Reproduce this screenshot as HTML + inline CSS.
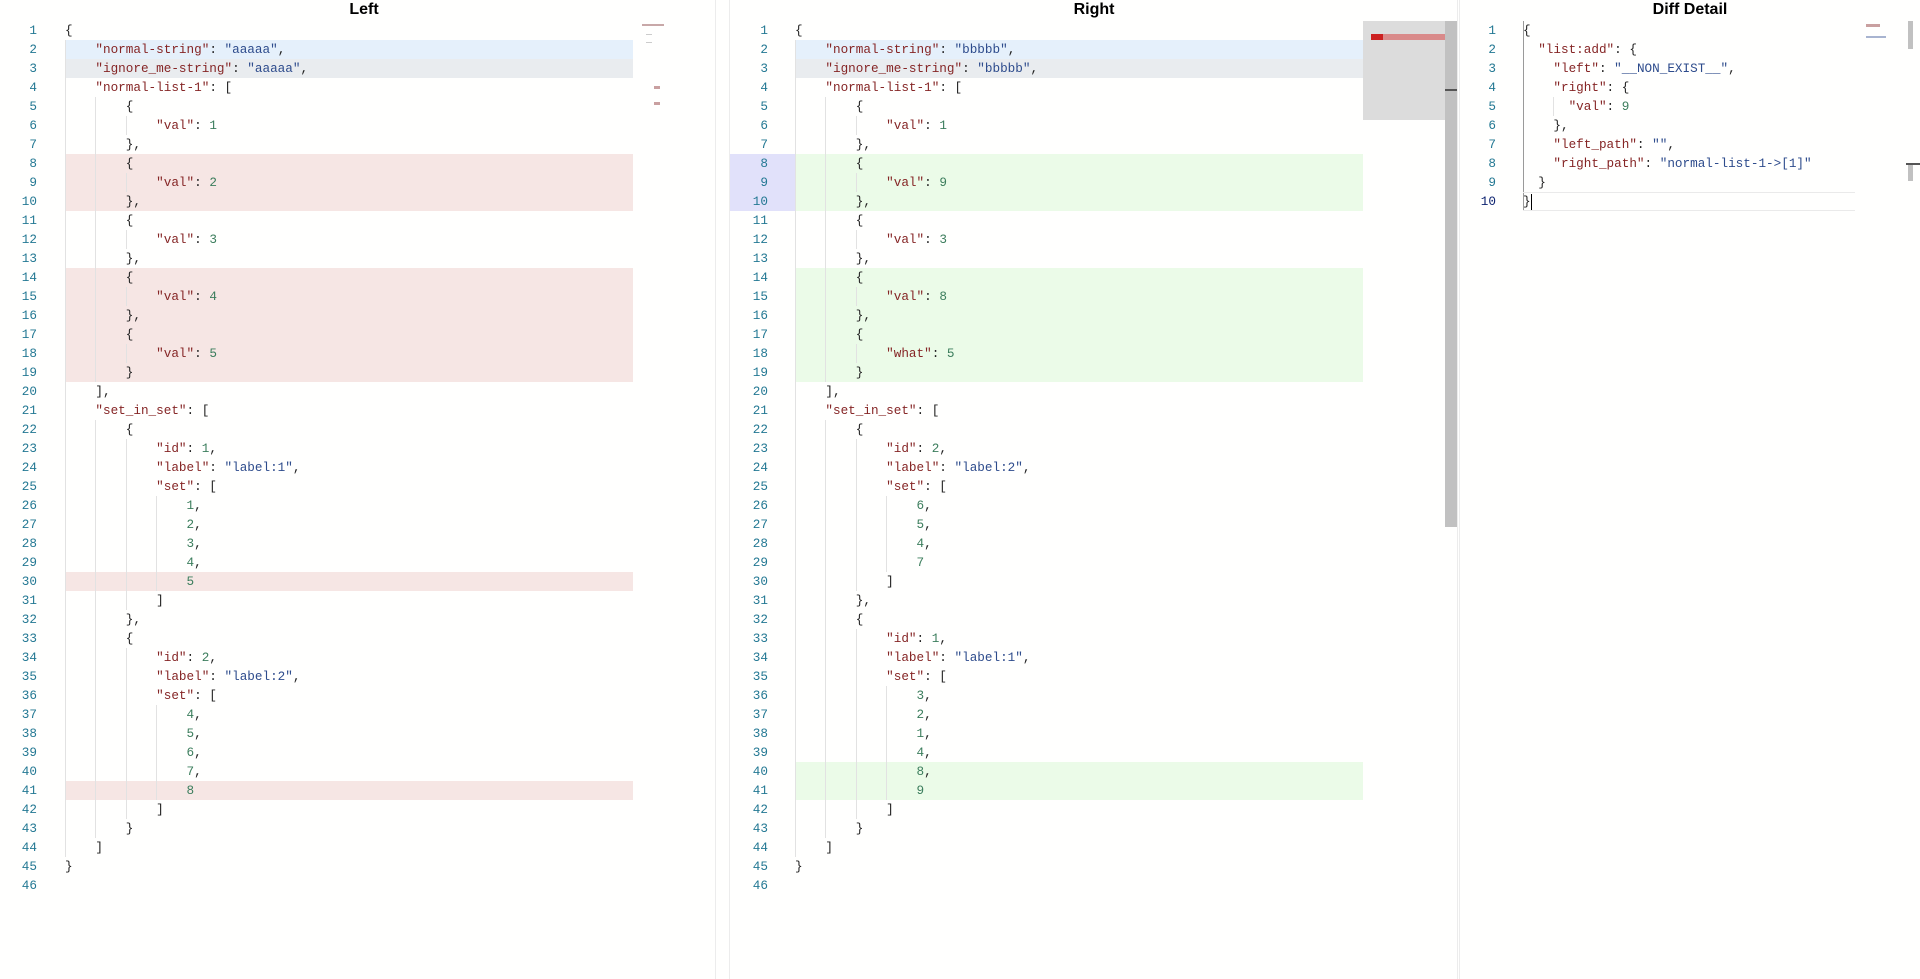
<!DOCTYPE html>
<html><head><meta charset="utf-8"><style>
*{margin:0;padding:0;box-sizing:border-box}
body{width:1920px;height:979px;background:#fffffe;position:relative;overflow:hidden;font-family:"Liberation Mono",monospace;font-size:12.67px}
.t{position:absolute;top:1px;font:bold 16px "Liberation Sans",sans-serif;color:#000;text-align:center}
.p{position:absolute;top:21px}
.r{height:19px;line-height:19px;display:flex;white-space:pre}
.r b{font-weight:normal;color:#237893;text-align:right;flex:none}
.r code{font-family:inherit;flex:none;color:#222}
.k{color:#852525}.s{color:#2d4b8c}.n{color:#3b7d5c}
i{display:inline-block;width:4ch;height:19px;vertical-align:top;border-left:1px solid #e2e2e2}
.d i{width:2ch}
.bl{background:#e5f0fb}.gr{background:#e9ecef}.rd{background:#f6e6e4}.gn{background:#ebfbe8}.gb{background:#e1e1fa}
.vl{position:absolute;top:0;width:1px;height:979px;background:#ececec}
.mm{position:absolute;background:#c9a0a0;height:1px}
</style></head><body>
<div class="t" style="left:0;width:728px">Left</div>
<div class="t" style="left:730px;width:728px">Right</div>
<div class="t" style="left:1460px;width:460px">Diff Detail</div>
<div class="vl" style="left:715px"></div>
<div class="vl" style="left:729px"></div>
<div class="vl" style="left:1457px"></div>
<div class="vl" style="left:1459px"></div>

<!-- Left -->
<div class="p" style="left:0">
<style>.L b{width:37px;margin-right:28px}.L code{width:568px}</style>
<div class="L">
<div class="r"><b>1</b><code>{</code></div>
<div class="r"><b>2</b><code class="bl"><i></i><span class="k">"normal-string"</span>: <span class="s">"aaaaa"</span>,</code></div>
<div class="r"><b>3</b><code class="gr"><i></i><span class="k">"ignore_me-string"</span>: <span class="s">"aaaaa"</span>,</code></div>
<div class="r"><b>4</b><code><i></i><span class="k">"normal-list-1"</span>: [</code></div>
<div class="r"><b>5</b><code><i></i><i></i>{</code></div>
<div class="r"><b>6</b><code><i></i><i></i><i></i><span class="k">"val"</span>: <span class="n">1</span></code></div>
<div class="r"><b>7</b><code><i></i><i></i>},</code></div>
<div class="r"><b>8</b><code class="rd"><i></i><i></i>{</code></div>
<div class="r"><b>9</b><code class="rd"><i></i><i></i><i></i><span class="k">"val"</span>: <span class="n">2</span></code></div>
<div class="r"><b>10</b><code class="rd"><i></i><i></i>},</code></div>
<div class="r"><b>11</b><code><i></i><i></i>{</code></div>
<div class="r"><b>12</b><code><i></i><i></i><i></i><span class="k">"val"</span>: <span class="n">3</span></code></div>
<div class="r"><b>13</b><code><i></i><i></i>},</code></div>
<div class="r"><b>14</b><code class="rd"><i></i><i></i>{</code></div>
<div class="r"><b>15</b><code class="rd"><i></i><i></i><i></i><span class="k">"val"</span>: <span class="n">4</span></code></div>
<div class="r"><b>16</b><code class="rd"><i></i><i></i>},</code></div>
<div class="r"><b>17</b><code class="rd"><i></i><i></i>{</code></div>
<div class="r"><b>18</b><code class="rd"><i></i><i></i><i></i><span class="k">"val"</span>: <span class="n">5</span></code></div>
<div class="r"><b>19</b><code class="rd"><i></i><i></i>}</code></div>
<div class="r"><b>20</b><code><i></i>],</code></div>
<div class="r"><b>21</b><code><i></i><span class="k">"set_in_set"</span>: [</code></div>
<div class="r"><b>22</b><code><i></i><i></i>{</code></div>
<div class="r"><b>23</b><code><i></i><i></i><i></i><span class="k">"id"</span>: <span class="n">1</span>,</code></div>
<div class="r"><b>24</b><code><i></i><i></i><i></i><span class="k">"label"</span>: <span class="s">"label:1"</span>,</code></div>
<div class="r"><b>25</b><code><i></i><i></i><i></i><span class="k">"set"</span>: [</code></div>
<div class="r"><b>26</b><code><i></i><i></i><i></i><i></i><span class="n">1</span>,</code></div>
<div class="r"><b>27</b><code><i></i><i></i><i></i><i></i><span class="n">2</span>,</code></div>
<div class="r"><b>28</b><code><i></i><i></i><i></i><i></i><span class="n">3</span>,</code></div>
<div class="r"><b>29</b><code><i></i><i></i><i></i><i></i><span class="n">4</span>,</code></div>
<div class="r"><b>30</b><code class="rd"><i></i><i></i><i></i><i></i><span class="n">5</span></code></div>
<div class="r"><b>31</b><code><i></i><i></i><i></i>]</code></div>
<div class="r"><b>32</b><code><i></i><i></i>},</code></div>
<div class="r"><b>33</b><code><i></i><i></i>{</code></div>
<div class="r"><b>34</b><code><i></i><i></i><i></i><span class="k">"id"</span>: <span class="n">2</span>,</code></div>
<div class="r"><b>35</b><code><i></i><i></i><i></i><span class="k">"label"</span>: <span class="s">"label:2"</span>,</code></div>
<div class="r"><b>36</b><code><i></i><i></i><i></i><span class="k">"set"</span>: [</code></div>
<div class="r"><b>37</b><code><i></i><i></i><i></i><i></i><span class="n">4</span>,</code></div>
<div class="r"><b>38</b><code><i></i><i></i><i></i><i></i><span class="n">5</span>,</code></div>
<div class="r"><b>39</b><code><i></i><i></i><i></i><i></i><span class="n">6</span>,</code></div>
<div class="r"><b>40</b><code><i></i><i></i><i></i><i></i><span class="n">7</span>,</code></div>
<div class="r"><b>41</b><code class="rd"><i></i><i></i><i></i><i></i><span class="n">8</span></code></div>
<div class="r"><b>42</b><code><i></i><i></i><i></i>]</code></div>
<div class="r"><b>43</b><code><i></i><i></i>}</code></div>
<div class="r"><b>44</b><code><i></i>]</code></div>
<div class="r"><b>45</b><code>}</code></div>
<div class="r"><b>46</b><code></code></div>
</div></div>

<!-- Right -->
<div class="p" style="left:730px">
<style>.R b{width:38px;margin-right:27px}.R code{width:568px}</style>
<div class="R">
<div class="r"><b>1</b><code>{</code></div>
<div class="r"><b>2</b><code class="bl"><i></i><span class="k">"normal-string"</span>: <span class="s">"bbbbb"</span>,</code></div>
<div class="r"><b>3</b><code class="gr"><i></i><span class="k">"ignore_me-string"</span>: <span class="s">"bbbbb"</span>,</code></div>
<div class="r"><b>4</b><code><i></i><span class="k">"normal-list-1"</span>: [</code></div>
<div class="r"><b>5</b><code><i></i><i></i>{</code></div>
<div class="r"><b>6</b><code><i></i><i></i><i></i><span class="k">"val"</span>: <span class="n">1</span></code></div>
<div class="r"><b>7</b><code><i></i><i></i>},</code></div>
<div class="r"><b class="gb" style="width:65px;margin:0;padding-right:27px">8</b><code class="gn"><i></i><i></i>{</code></div>
<div class="r"><b class="gb" style="width:65px;margin:0;padding-right:27px">9</b><code class="gn"><i></i><i></i><i></i><span class="k">"val"</span>: <span class="n">9</span></code></div>
<div class="r"><b class="gb" style="width:65px;margin:0;padding-right:27px">10</b><code class="gn"><i></i><i></i>},</code></div>
<div class="r"><b>11</b><code><i></i><i></i>{</code></div>
<div class="r"><b>12</b><code><i></i><i></i><i></i><span class="k">"val"</span>: <span class="n">3</span></code></div>
<div class="r"><b>13</b><code><i></i><i></i>},</code></div>
<div class="r"><b>14</b><code class="gn"><i></i><i></i>{</code></div>
<div class="r"><b>15</b><code class="gn"><i></i><i></i><i></i><span class="k">"val"</span>: <span class="n">8</span></code></div>
<div class="r"><b>16</b><code class="gn"><i></i><i></i>},</code></div>
<div class="r"><b>17</b><code class="gn"><i></i><i></i>{</code></div>
<div class="r"><b>18</b><code class="gn"><i></i><i></i><i></i><span class="k">"what"</span>: <span class="n">5</span></code></div>
<div class="r"><b>19</b><code class="gn"><i></i><i></i>}</code></div>
<div class="r"><b>20</b><code><i></i>],</code></div>
<div class="r"><b>21</b><code><i></i><span class="k">"set_in_set"</span>: [</code></div>
<div class="r"><b>22</b><code><i></i><i></i>{</code></div>
<div class="r"><b>23</b><code><i></i><i></i><i></i><span class="k">"id"</span>: <span class="n">2</span>,</code></div>
<div class="r"><b>24</b><code><i></i><i></i><i></i><span class="k">"label"</span>: <span class="s">"label:2"</span>,</code></div>
<div class="r"><b>25</b><code><i></i><i></i><i></i><span class="k">"set"</span>: [</code></div>
<div class="r"><b>26</b><code><i></i><i></i><i></i><i></i><span class="n">6</span>,</code></div>
<div class="r"><b>27</b><code><i></i><i></i><i></i><i></i><span class="n">5</span>,</code></div>
<div class="r"><b>28</b><code><i></i><i></i><i></i><i></i><span class="n">4</span>,</code></div>
<div class="r"><b>29</b><code><i></i><i></i><i></i><i></i><span class="n">7</span></code></div>
<div class="r"><b>30</b><code><i></i><i></i><i></i>]</code></div>
<div class="r"><b>31</b><code><i></i><i></i>},</code></div>
<div class="r"><b>32</b><code><i></i><i></i>{</code></div>
<div class="r"><b>33</b><code><i></i><i></i><i></i><span class="k">"id"</span>: <span class="n">1</span>,</code></div>
<div class="r"><b>34</b><code><i></i><i></i><i></i><span class="k">"label"</span>: <span class="s">"label:1"</span>,</code></div>
<div class="r"><b>35</b><code><i></i><i></i><i></i><span class="k">"set"</span>: [</code></div>
<div class="r"><b>36</b><code><i></i><i></i><i></i><i></i><span class="n">3</span>,</code></div>
<div class="r"><b>37</b><code><i></i><i></i><i></i><i></i><span class="n">2</span>,</code></div>
<div class="r"><b>38</b><code><i></i><i></i><i></i><i></i><span class="n">1</span>,</code></div>
<div class="r"><b>39</b><code><i></i><i></i><i></i><i></i><span class="n">4</span>,</code></div>
<div class="r"><b>40</b><code class="gn"><i></i><i></i><i></i><i></i><span class="n">8</span>,</code></div>
<div class="r"><b>41</b><code class="gn"><i></i><i></i><i></i><i></i><span class="n">9</span></code></div>
<div class="r"><b>42</b><code><i></i><i></i><i></i>]</code></div>
<div class="r"><b>43</b><code><i></i><i></i>}</code></div>
<div class="r"><b>44</b><code><i></i>]</code></div>
<div class="r"><b>45</b><code>}</code></div>
<div class="r"><b>46</b><code></code></div>
</div></div>

<!-- minimaps / scrollbars -->
<div class="mm" style="left:642px;top:24px;width:22px;height:2px;background:#c8a8a8"></div>
<div class="mm" style="left:646px;top:34px;width:6px;background:#ccc"></div>
<div class="mm" style="left:646px;top:42px;width:6px;background:#ccc"></div>
<div class="mm" style="left:654px;top:86px;width:6px;height:3px"></div>
<div class="mm" style="left:654px;top:102px;width:6px;height:3px"></div>
<div style="position:absolute;left:1363px;top:21px;width:82px;height:99px;background:#dcdcdc"></div>
<div style="position:absolute;left:1371px;top:34px;width:74px;height:6px;background:#d98a8a"></div>
<div style="position:absolute;left:1371px;top:34px;width:12px;height:6px;background:#cc2020"></div>
<div style="position:absolute;left:1445px;top:21px;width:12px;height:506px;background:#c1c1c1"></div>
<div style="position:absolute;left:1445px;top:89px;width:12px;height:2px;background:#555"></div>
<div class="mm" style="left:1866px;top:24px;width:14px;height:3px"></div>
<div class="mm" style="left:1866px;top:36px;width:20px;height:2px;background:#a8b4d0"></div>
<div style="position:absolute;left:1908px;top:21px;width:5px;height:28px;background:#c1c1c1"></div>
<div style="position:absolute;left:1908px;top:163px;width:5px;height:18px;background:#c1c1c1"></div>
<div style="position:absolute;left:1906px;top:163px;width:14px;height:2px;background:#555"></div>

<!-- Diff detail -->
<div style="position:absolute;left:1523px;top:21px;width:1px;height:190px;background:#9a9a9a"></div>
<div class="p d" style="left:1460px">
<style>.D b{width:36px;margin-right:27px}.D code{width:332px}.D i{border-left-color:transparent}.D i.g{border-left-color:#e2e2e2}</style>
<div class="D">
<div class="r"><b>1</b><code>{</code></div>
<div class="r"><b>2</b><code><i></i><span class="k">"list:add"</span>: {</code></div>
<div class="r"><b>3</b><code><i></i><i></i><span class="k">"left"</span>: <span class="s">"__NON_EXIST__"</span>,</code></div>
<div class="r"><b>4</b><code><i></i><i></i><span class="k">"right"</span>: {</code></div>
<div class="r"><b>5</b><code><i></i><i></i><i class="g"></i><span class="k">"val"</span>: <span class="n">9</span></code></div>
<div class="r"><b>6</b><code><i></i><i></i>},</code></div>
<div class="r"><b>7</b><code><i></i><i></i><span class="k">"left_path"</span>: <span class="s">""</span>,</code></div>
<div class="r"><b>8</b><code><i></i><i></i><span class="k">"right_path"</span>: <span class="s">"normal-list-1-&gt;[1]"</span></code></div>
<div class="r"><b>9</b><code><i></i>}</code></div>
<div class="r"><b style="color:#0b216f">10</b><code style="border-top:1px solid #eaeaea;border-bottom:1px solid #eaeaea;line-height:17px">}<span style="display:inline-block;width:1px;height:16px;background:#000;vertical-align:middle"></span></code></div>
</div></div>
</body></html>
